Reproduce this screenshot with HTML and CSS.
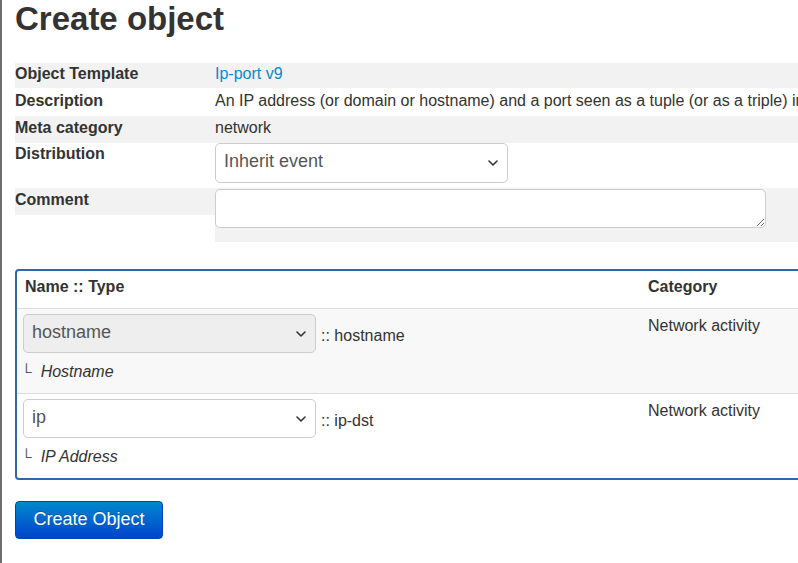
FILE: index.html
```html
<!DOCTYPE html>
<html lang="en">
<head>
<meta charset="utf-8">
<title>Create object</title>
<link rel="stylesheet" href="styles.css">
</head>
<body>
<div class="page">
  <h2 class="title">Create object</h2>

  <dl class="meta">
    <div class="meta-row r-template shaded">
      <dt>Object Template</dt>
      <dd><a href="#" class="link">Ip-port v9</a></dd>
    </div>
    <div class="meta-row r-desc">
      <dt>Description</dt>
      <dd>An IP address (or domain or hostname) and a port seen as a tuple (or as a triple) in a specific time frame.</dd>
    </div>
    <div class="meta-row r-cat shaded">
      <dt>Meta category</dt>
      <dd>network</dd>
    </div>
    <div class="meta-row r-dist">
      <dt>Distribution</dt>
      <dd><select class="select select-dist"><option>Inherit event</option></select></dd>
    </div>
    <div class="meta-row r-comment shaded">
      <dt>Comment</dt>
      <dd><textarea class="comment"></textarea></dd>
    </div>
  </dl>

  <div class="attrs">
    <div class="attr-row head">
      <div class="cell name">Name :: Type</div>
      <div class="cell category">Category</div>
    </div>
    <div class="attr-row striped">
      <div class="cell name">
        <div class="name-line">
          <select class="select select-attr" disabled><option>hostname</option></select>
          <span class="type">:: hostname</span>
        </div>
        <div class="note"><span class="corner">└</span><em>Hostname</em></div>
      </div>
      <div class="cell category">Network activity</div>
    </div>
    <div class="attr-row last">
      <div class="cell name">
        <div class="name-line">
          <select class="select select-attr"><option>ip</option></select>
          <span class="type">:: ip-dst</span>
        </div>
        <div class="note"><span class="corner">└</span><em>IP Address</em></div>
      </div>
      <div class="cell category">Network activity</div>
    </div>
  </div>

  <button class="btn-primary" type="button">Create Object</button>
</div>
</body>
</html>
```

FILE: styles.css
```css
html, body {
  margin: 0;
  padding: 0;
}
body {
  font-family: "Liberation Sans", Arial, Helvetica, sans-serif;
  font-size: 16px;
  line-height: 20px;
  color: #333;
  background: #fff;
  overflow: hidden;
  min-height: 100vh;
  border-left: 2px solid #6e6e6e;
  box-sizing: border-box;
}
.page {
  padding-left: 13px;
  width: 1200px;
}
.title {
  font-size: 33px;
  line-height: 36px;
  font-weight: bold;
  margin: 1px 0 26px;
  color: #333;
}

/* meta list */
.meta {
  margin: 0;
  width: 783px;
}
.meta-row {
  display: flex;
  align-items: flex-start;
}
.meta-row dt {
  width: 200px;
  flex: none;
  font-weight: bold;
  margin: 0;
  box-sizing: border-box;
}
.meta-row dd {
  flex: 1;
  min-width: 0;
  margin: 0;
  white-space: nowrap;
  overflow: hidden;
  box-sizing: border-box;
}
.shaded dt, .shaded dd {
  background: #f2f2f2;
}
.r-template dt, .r-template dd { height: 25px; padding-top: 1px; }
.r-desc dt, .r-desc dd { height: 28px; padding-top: 3px; }
.r-cat dt, .r-cat dd { height: 27px; padding-top: 2px; }
.r-dist dt { padding-top: 1px; }
.r-dist dd { padding-bottom: 5px; }
.r-comment dt { height: 27px; padding-top: 2px; }
.r-comment dd { padding-top: 1px; padding-bottom: 14px; height: 54px; }

.link {
  color: #0a88d0;
  text-decoration: none;
}

.select {
  -webkit-appearance: none;
  appearance: none;
  font-family: "Liberation Sans", Arial, sans-serif;
  font-size: 18px;
  line-height: 20px;
  color: #555;
  background-color: #fff;
  border: 1px solid #ccc;
  border-radius: 5px;
  padding: 6.5px 30px 10.5px 8px;
  width: 293px;
  box-sizing: border-box;
  margin: 0;
  display: block;
  background-image: url("data:image/svg+xml;utf8,<svg xmlns='http://www.w3.org/2000/svg' width='10' height='6' viewBox='0 0 10 6'><path d='M1 1 L5 5 L9 1' fill='none' stroke='%23333' stroke-width='1.6' stroke-linecap='round' stroke-linejoin='round'/></svg>");
  background-repeat: no-repeat;
  background-position: right 9px center;
  background-size: 10px 6px;
  opacity: 1;
}
.select-dist {
  height: 40px;
}
.select-attr {
  height: 39px;
}
.select:disabled {
  background-color: #eee;
  color: #555;
  opacity: 1;
}

.comment {
  display: block;
  width: 551px;
  height: 39px;
  box-sizing: border-box;
  border: 1px solid #ccc;
  border-radius: 5px;
  margin: 0;
  padding: 4px 6px;
  font-family: "Liberation Sans", Arial, sans-serif;
  font-size: 16px;
  background: #fff;
}

/* attributes table */
.attrs {
  margin-top: 27px;
  border: 2px solid #3366a3;
  border-radius: 4px;
  width: 1150px;
}
.attr-row {
  display: grid;
  grid-template-columns: 623px 1fr;
  border-bottom: 1px solid #ddd;
}
.attr-row.last {
  border-bottom: none;
}
.attr-row.head {
  font-weight: bold;
}
.attr-row.head .cell {
  padding: 6px 8px 11px;
}
.attr-row.striped {
  background: #f8f8f8;
}
.cell {
  padding: 5px 8px 11px 6px;
  box-sizing: border-box;
}
.cell.category {
  padding: 7px 8px 0;
}
.name-line {
  display: flex;
  align-items: flex-start;
  gap: 5px;
}
.type {
  margin-top: 12px;
}
.note {
  margin-top: 9px;
  margin-left: -2px;
  display: flex;
  gap: 9px;
}
.corner {
  font-size: 15px;
  color: #555;
}
.note em {
  font-style: italic;
}

.btn-primary {
  display: block;
  margin-top: 21px;
  width: 148px;
  height: 38px;
  box-sizing: border-box;
  font-family: "Liberation Sans", Arial, sans-serif;
  font-size: 18px;
  line-height: 20px;
  color: #fff;
  background: linear-gradient(to bottom, #0088cc, #0044cc);
  border: 1px solid #0044b3;
  border-radius: 4px;
  padding: 6px 0 8px;
  text-shadow: 0 -1px 0 rgba(0,0,0,0.2);
  cursor: pointer;
}
```
